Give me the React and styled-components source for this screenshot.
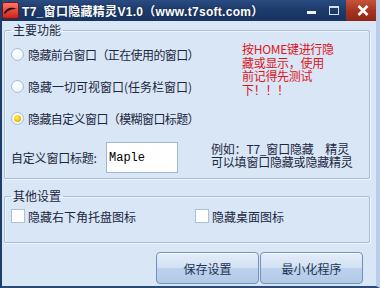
import React from 'react';
import styled, { createGlobalStyle } from 'styled-components';

const GlobalStyle = createGlobalStyle`
  html, body {
    margin: 0;
    padding: 0;
    background: #d9e6f6;
  }
  * {
    box-sizing: border-box;
  }
`;

const Window = styled.div`
  width: 380px;
  height: 288px;
  display: flex;
  flex-direction: column;
  background: #d9e6f6;
  border-left: 2px solid #1f3d6c;
  border-right: 4px solid #b9cde8;
  border-bottom: 2px solid #2a4a7a;
  font-family: "Noto Sans CJK SC", "Noto Sans", sans-serif;
  font-size: 12px;
  color: #1b2740;
  overflow: hidden;
`;

const TitleBar = styled.div`
  height: 21px;
  margin: 0 -4px 0 -2px;
  display: flex;
  align-items: center;
  background: linear-gradient(180deg, #2a4c82 0%, #1d3b6b 45%, #183463 100%);
  color: #fff;
`;

const AppIcon = styled.svg`
  width: 17px;
  height: 17px;
  margin: 0 3px 0 2px;
  flex: none;
`;

const Title = styled.div`
  flex: 1;
  font-family: "Liberation Sans", "Noto Sans CJK SC", sans-serif;
  font-weight: bold;
  font-size: 12px;
  letter-spacing: 0.3px;
  white-space: nowrap;
  text-shadow: 0 0 2px rgba(0, 0, 0, 0.4);
`;

const CtrlButton = styled.div`
  width: ${(p) => p.$w}px;
  height: 21px;
  display: flex;
  align-items: center;
  justify-content: center;
  background: ${(p) =>
    p.$close ? 'linear-gradient(180deg, #c4553c 0%, #a7341f 50%, #8e2617 100%)' : 'transparent'};
`;

const MinGlyph = styled.span`
  width: 9px;
  height: 3px;
  margin-top: 3px;
  background: #eef4fc;
`;

const MaxGlyph = styled.span`
  width: 10px;
  height: 9px;
  border: 1px solid #d4e2f3;
  border-top-width: 2px;
`;

const Body = styled.div`
  flex: 1;
  display: flex;
  flex-direction: column;
  padding: 2px 6px 0 2px;
`;

const Group = styled.fieldset`
  margin: ${(p) => p.$top || 0}px 0 0 0;
  padding: ${(p) => p.$pad};
  border: 1px solid #a6bddb;
  border-radius: 2px;
  box-shadow: inset 1px 1px 0 rgba(255, 255, 255, 0.6), 1px 1px 0 rgba(255, 255, 255, 0.6);
  min-width: 0;
`;

const Legend = styled.legend`
  margin-left: 6px;
  padding: 0 2px;
  line-height: 14px;
  font-size: 12px;
  color: #1b2740;
`;

const TopArea = styled.div`
  display: grid;
  grid-template-columns: 230px 1fr;
`;

const RadioList = styled.div`
  display: flex;
  flex-direction: column;
  padding-left: 6px;
`;

const RadioRow = styled.label`
  height: 32px;
  display: flex;
  align-items: center;
  gap: 4px;
  white-space: nowrap;
  letter-spacing: ${(p) => p.$squeeze}px;
`;

const RadioDot = styled.span`
  width: 13px;
  height: 13px;
  border-radius: 50%;
  border: 1px solid #a9bcd3;
  background: radial-gradient(circle at 40% 35%, #ffffff 0%, #f3f6fa 55%, #dde5ef 100%);
  display: flex;
  align-items: center;
  justify-content: center;
  flex: none;
  &::after {
    content: '';
    width: 7px;
    height: 7px;
    border-radius: 50%;
    background: radial-gradient(circle at 40% 35%, #fff27a 0%, #f2c400 55%, #c98f00 100%);
    display: ${(p) => (p.$on ? 'block' : 'none')};
  }
`;

const Note = styled.div`
  padding-top: 4px;
  padding-left: 7px;
  color: #e0141c;
  font-size: 12px;
  line-height: 13.5px;
  letter-spacing: -0.3px;
  white-space: nowrap;
`;

const InputRow = styled.div`
  display: flex;
  align-items: center;
  margin-top: 8px;
  padding-left: 6px;
`;

const FieldLabel = styled.span`
  width: 95px;
  white-space: nowrap;
  letter-spacing: -0.2px;
`;

const TextBox = styled.div`
  width: 72px;
  height: 31px;
  background: #fff;
  border: 1px solid #9fb7d6;
  padding: 8px 0 0 2px;
  font-family: "Liberation Mono", monospace;
  font-size: 12px;
  line-height: 14px;
  color: #000;
`;

const Example = styled.div`
  margin-left: 33px;
  margin-top: -4px;
  line-height: 12.5px;
  letter-spacing: -0.2px;
  white-space: nowrap;
`;

const CheckRow = styled.div`
  display: grid;
  grid-template-columns: 184px 1fr;
  padding-left: 6px;
`;

const CheckItem = styled.label`
  display: flex;
  align-items: center;
  gap: 3px;
  height: 14px;
  white-space: nowrap;
`;

const CheckBox = styled.span`
  width: 14px;
  height: 14px;
  background: #fff;
  border: 1px solid #aebfd6;
  flex: none;
`;

const ButtonBar = styled.div`
  display: flex;
  justify-content: flex-end;
  gap: 1px;
  margin-top: 9px;
  padding-right: 7px;
`;

const Button = styled.button`
  width: 103px;
  height: 32px;
  border: 1px solid #7390b8;
  border-radius: 4px;
  background: linear-gradient(180deg, #e3edf9 0%, #d2e1f3 48%, #bcd1ec 52%, #b3cae8 100%);
  box-shadow: inset 0 1px 0 rgba(255, 255, 255, 0.8);
  font-family: "Noto Sans CJK SC", "Noto Sans", sans-serif;
  font-size: 12px;
  color: #243452;
  padding: 0;
`;

const options = [
  { text: '隐藏前台窗口（正在使用的窗口）', on: false, squeeze: -0.6 },
  { text: '隐藏一切可视窗口(任务栏窗口)', on: false, squeeze: 0 },
  { text: '隐藏自定义窗口（模糊窗口标题）', on: true, squeeze: -0.6 },
];

const noteLines = ['按HOME键进行隐', '藏或显示，使用', '前记得先测试', '下！！！'];

export default function App() {
  return (
    <>
      <GlobalStyle />
      <Window>
        <TitleBar>
          <AppIcon viewBox="0 0 17 17">
            <defs>
              <linearGradient id="ic" x1="0" y1="0" x2="0" y2="1">
                <stop offset="0" stopColor="#ff7a6a" />
                <stop offset="1" stopColor="#c9201a" />
              </linearGradient>
            </defs>
            <rect x="0.5" y="0.5" width="16" height="16" rx="2" fill="url(#ic)" stroke="#7a1410" />
            <path d="M2 11 C5 5, 9 5, 15 7 C10 7, 6 8, 3 12 Z" fill="#2a0c0a" />
          </AppIcon>
          <Title>T7_窗口隐藏精灵V1.0（www.t7soft.com）</Title>
          <CtrlButton $w={22}>
            <MinGlyph />
          </CtrlButton>
          <CtrlButton $w={24}>
            <MaxGlyph />
          </CtrlButton>
          <CtrlButton $w={34} $close>
            <svg width="12" height="11" viewBox="0 0 12 11">
              <path d="M1.5 1 L10.5 10 M10.5 1 L1.5 10" stroke="#fff" strokeWidth="2.6" />
            </svg>
          </CtrlButton>
        </TitleBar>

        <Body>
          <Group $pad="1px 0 5px 0">
            <Legend>主要功能</Legend>
            <TopArea>
              <RadioList>
                {options.map((o) => (
                  <RadioRow key={o.text} $squeeze={o.squeeze}>
                    <RadioDot $on={o.on} />
                    {o.text}
                  </RadioRow>
                ))}
              </RadioList>
              <Note>
                {noteLines.map((l) => (
                  <div key={l}>{l}</div>
                ))}
              </Note>
            </TopArea>
            <InputRow>
              <FieldLabel>自定义窗口标题:</FieldLabel>
              <TextBox>Maple</TextBox>
              <Example>
                <div>例如：T7_窗口隐藏　精灵</div>
                <div>可以填窗口隐藏或隐藏精灵</div>
              </Example>
            </InputRow>
          </Group>

          <Group $top={10} $pad="6px 0 19px 0">
            <Legend>其他设置</Legend>
            <CheckRow>
              <CheckItem>
                <CheckBox />
                隐藏右下角托盘图标
              </CheckItem>
              <CheckItem>
                <CheckBox />
                隐藏桌面图标
              </CheckItem>
            </CheckRow>
          </Group>

          <ButtonBar>
            <Button>保存设置</Button>
            <Button>最小化程序</Button>
          </ButtonBar>
        </Body>
      </Window>
    </>
  );
}
